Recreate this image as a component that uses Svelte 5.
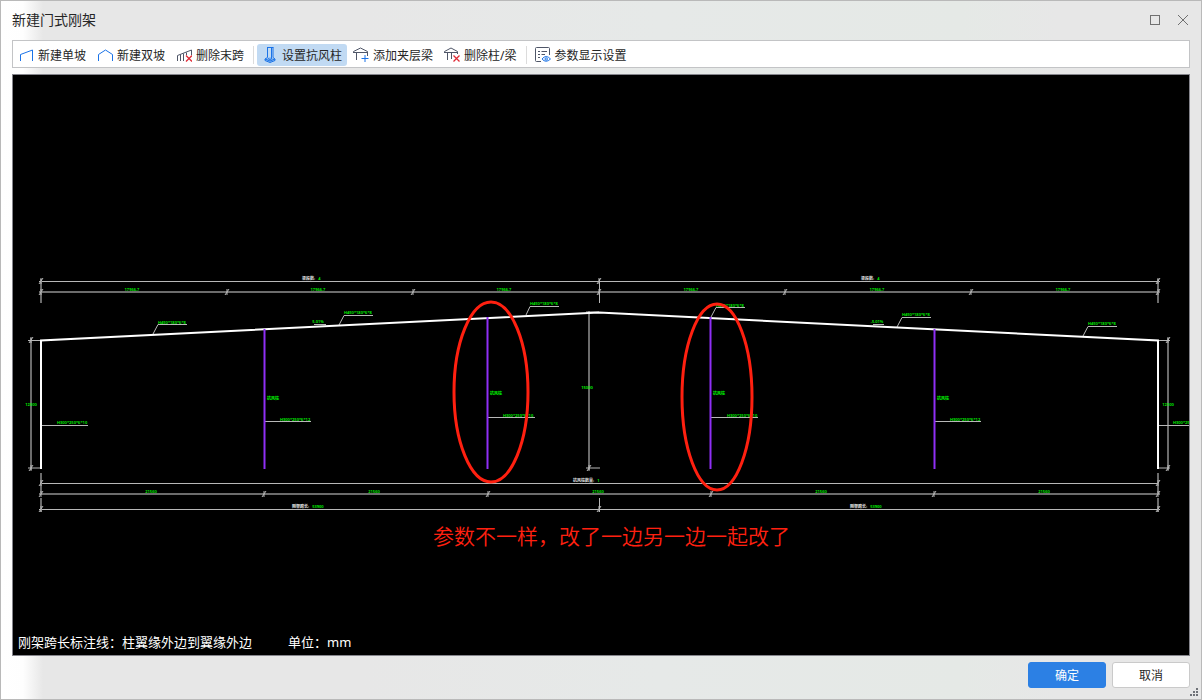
<script lang="ts">
  // Portal frame dialog: toolbar on top, elevation drawing below, confirm / cancel at the bottom.

  type Dim = { x: number; y: number; text: string };
  type Leader = { points: string; x: number; y: number; text: string };
  type Caption = { x: number; y: number; label: string; value: string };

  let activeTool = $state('wind');

  const bays = [41, 227, 413, 599, 785, 971, 1158];
  const spans = [41, 264, 488, 711, 934, 1158];

  const dims: Dim[] = [
    ...[132, 318, 504, 691, 877, 1063].map((x) => ({ x, y: 291, text: '17966.7' })),
    ...[151, 374, 598, 821, 1044].map((x) => ({ x, y: 493, text: '21560' })),
    { x: 31, y: 406, text: '12300' },
    { x: 587, y: 389, text: '15000' },
    { x: 1168, y: 406, text: '12300' },
    { x: 318, y: 323, text: '5.01%' },
    { x: 877, y: 323, text: '-5.01%' },
  ];

  const windColumns = [
    { x: 264, top: 329, label: 400 },
    { x: 487, top: 317, label: 395 },
    { x: 710, top: 317, label: 395 },
    { x: 934, top: 329, label: 400 },
  ];

  const leaders: Leader[] = [
    { points: '153,334 158,324.5 187,324.5', x: 158, y: 324, text: 'H450*180*6*8' },
    { points: '339,325 344,315.5 373,315.5', x: 344, y: 314, text: 'H450*180*6*8' },
    { points: '526,315 530,306.5 559,306.5', x: 530, y: 305, text: 'H450*180*6*8' },
    { points: '711,317 716,307.5 745,307.5', x: 716, y: 307, text: 'H450*180*6*8' },
    { points: '897,327 902,317.5 931,317.5', x: 902, y: 316, text: 'H450*180*6*8' },
    { points: '1083,336 1088,326.5 1117,326.5', x: 1088, y: 325, text: 'H450*180*6*8' },
    { points: '41,425.5 88,425.5', x: 57, y: 424, text: 'H300*250*6*10' },
    { points: '264,421.5 311,421.5', x: 280, y: 421, text: 'H300*250*6*12' },
    { points: '488,417.5 535,417.5', x: 503, y: 417, text: 'H300*250*6*10' },
    { points: '711,417.5 758,417.5', x: 727, y: 417, text: 'H300*250*6*10' },
    { points: '934,421.5 981,421.5', x: 950, y: 421, text: 'H300*250*6*12' },
    { points: '1158,425.5 1205,425.5', x: 1173, y: 424, text: 'H300*250*6*10' },
  ];

  const captions: Caption[] = [
    { x: 302, y: 280, label: '梁段数:', value: '4' },
    { x: 861, y: 280, label: '梁段数:', value: '4' },
    { x: 573, y: 482, label: '抗风柱数量:', value: '1' },
    { x: 292, y: 508, label: '刚架跨长:', value: '53900' },
    { x: 850, y: 508, label: '刚架跨长:', value: '53900' },
  ];
</script>

{#snippet tick(x: number, y: number)}
  <path d="M{x - 2} {y + 3}L{x + 2} {y - 3}M{x} {y - 3}v6" />
{/snippet}

<div class="window">
  <header>
    <h1>新建门式刚架</h1>
    <div class="controls">
      <button type="button" aria-label="最大化">
        <svg width="12" height="12" viewBox="0 0 12 12"><rect x="1.5" y="1.5" width="9" height="9" /></svg>
      </button>
      <button type="button" aria-label="关闭">
        <svg width="12" height="12" viewBox="0 0 12 12"><path d="M1 1l10 10M11 1L1 11" /></svg>
      </button>
    </div>
  </header>

  <nav class="toolbar">
    <button type="button" class:active={activeTool === 'single'} onclick={() => (activeTool = 'single')}>
      <svg class="icon" viewBox="0 0 16 16"><path class="blue" d="M2.5 14V7.5L14.5 3v11" /></svg>
      新建单坡
    </button>
    <button type="button" class:active={activeTool === 'double'} onclick={() => (activeTool = 'double')}>
      <svg class="icon" viewBox="0 0 16 16"><path class="blue" d="M1.5 14V7.5L8.5 3l7 4.5V14" /></svg>
      新建双坡
    </button>
    <button type="button" class:active={activeTool === 'removeSpan'} onclick={() => (activeTool = 'removeSpan')}>
      <svg class="icon" viewBox="0 0 16 16">
        <path class="dark" d="M1.5 14V8.5L15.5 3v5M4.5 14V7.5M7.5 14V6.5M10.5 8V5.5" />
        <path class="red" d="M10 8.5l6 6M16 8.5l-6 6" />
      </svg>
      删除末跨
    </button>
    <span class="sep"></span>
    <button type="button" class:active={activeTool === 'wind'} onclick={() => (activeTool = 'wind')}>
      <svg class="icon" viewBox="0 0 16 16">
        <path class="soft" d="M3 12l5-2 5 2v1l-5 2.5L3 13z" />
        <path class="blue" d="M5 .5h6.500M5.500 .5v10M9.500 .5v11M11 .5v10M5.500 10.500L3 12v1.500l5 2 5-2V12l-2-1.500M3 12l5 2 5-2M6 11.500l2 1 2-1" />
      </svg>
      设置抗风柱
    </button>
    <button type="button" class:active={activeTool === 'addBeam'} onclick={() => (activeTool = 'addBeam')}>
      <svg class="icon" viewBox="0 0 16 16">
        <path class="dark" d="M.5 6V4.500L7.500 1l7 3.500V9M1 5.500h13.500M3.500 6v7" />
        <path class="blue" d="M8.500 11.500h7M12 8v7" />
      </svg>
      添加夹层梁
    </button>
    <button type="button" class:active={activeTool === 'removeBeam'} onclick={() => (activeTool = 'removeBeam')}>
      <svg class="icon" viewBox="0 0 16 16">
        <path class="dark" d="M.5 6V4.500L7 1l6.500 3.500V7M1 5.500h12.500M3.500 6v7M7.500 6v6" />
        <path class="red" d="M9.5 8.5l6 6M15.5 8.5l-6 6" />
      </svg>
      删除柱/梁
    </button>
    <span class="sep"></span>
    <button type="button" class:active={activeTool === 'display'} onclick={() => (activeTool = 'display')}>
      <svg class="icon" viewBox="0 0 16 16">
        <path class="dark" d="M6 14.5H1.5a1 1 0 0 1-1-1V1.5a1 1 0 0 1 1-1h12a1 1 0 0 1 1 1V8M3 4.5h2M6.5 4.5H12M3 7.5h2M6.5 7.5H10M3 10.5h2" />
        <path class="blue" d="M7 12q4-5 8.5 0q-4.5 4.5-8.5 0z" />
        <circle class="blue" cx="11.2" cy="12" r="1.2" />
      </svg>
      参数显示设置
    </button>
  </nav>

  <main>
    <svg class="drawing" viewBox="13 75 1176 580" role="img" aria-label="刚架立面图">
      <g class="dim">
        <path d="M39 281.5H1160M41 483.5H1158M39 509.5H1160" />
        <path class="faint" d="M39 292H1160M39 494H1160" />
        <path d="M599.5 279v24M599.5 498v14" />
        <path class="faint" d="M41 279v24M1158 279v24M41 473v21M1158 473v21M41 498v14M1158 498v14" />
        <path class="faint" d="M31 338v132M1168 338v132M589 311v159" />
        <path d="M28 340.5H41M28 468H41M1158 340.5h12M1158 468h12M586 312h13M586 468h14" />
        <path d="M314 324.5h12M873 324.5h11" />
        {#each bays as x (x)}
          {@render tick(x, 292)}
        {/each}
        {#each spans as x (x)}
          {@render tick(x, 494)}
        {/each}
        {#each [41, 599, 1158] as x (x)}
          {@render tick(x, 281)}
          {@render tick(x, 509)}
        {/each}
        {#each [41, 1158] as x (x)}
          {@render tick(x, 483)}
        {/each}
        {#each [31, 1168] as x (x)}
          {@render tick(x, 340)}
          {@render tick(x, 468)}
        {/each}
        {@render tick(589, 468)}
        {#each leaders as leader (leader.points)}
          <polyline points={leader.points} />
        {/each}
      </g>

      <path class="frame" d="M41 469V340.5L599 312.5L1158 340.5V469" />
      {#each windColumns as col (col.x)}
        <path class="wind" d="M{col.x + 0.5} {col.top}V469" />
        <text class="note" x={col.x + 3} y={col.label}>抗风柱</text>
      {/each}

      {#each dims as d}
        <text class="note mid" x={d.x} y={d.y}>{d.text}</text>
      {/each}
      {#each leaders as leader (leader.points)}
        <text class="note" x={leader.x} y={leader.y}>{leader.text}</text>
      {/each}
      {#each captions as c}
        <text class="note caption" x={c.x} y={c.y}>{c.label} <tspan dx="2">{c.value}</tspan></text>
      {/each}

      <ellipse class="mark" cx="491" cy="392" rx="37" ry="90" />
      <ellipse class="mark" cx="717" cy="397" rx="35" ry="93" />
      <text class="remark" x="433" y="544">参数不一样，改了一边另一边一起改了</text>
    </svg>
    <p class="hint">
      <span>刚架跨长标注线：柱翼缘外边到翼缘外边</span>
      <span>单位：mm</span>
    </p>
  </main>

  <footer>
    <button type="button" class="primary">确定</button>
    <button type="button">取消</button>
  </footer>

  <svg class="grip" width="8" height="8" viewBox="0 0 8 8">
    <path d="M6 0h2v2H6zM3 3h2v2H3zM6 3h2v2H6zM0 6h2v2H0zM3 6h2v2H3zM6 6h2v2H6z" />
  </svg>
</div>

<style>
  :global(body) {
    margin: 0;
  }

  .window {
    position: relative;
    box-sizing: border-box;
    min-height: 100vh;
    display: flex;
    flex-direction: column;
    padding: 0 11px;
    border: 1px solid #b9b9b9;
    background: linear-gradient(90deg, #fff 0, #fefefe 22px, #e7e7e7 42px, #e7e7e7 30%, #e6e9e8 55%, #e5e9e6 80%, #e7e7e7 88%);
    color: #262626;
    font-family: 'Noto Sans', 'Noto Sans CJK SC', sans-serif;
    font-size: 12px;
  }

  button {
    font: inherit;
    color: inherit;
    border: none;
    background: none;
    padding: 0;
    cursor: pointer;
  }

  header {
    box-sizing: border-box;
    height: 39px;
    display: flex;
    align-items: center;
    justify-content: space-between;
    padding: 0 1px 2px 0;
  }

  h1 {
    margin: 0;
    font-size: 14px;
    font-weight: 400;
    line-height: 20px;
  }

  .controls {
    display: flex;
    gap: 16px;
  }

  .controls button {
    display: flex;
  }

  .controls svg {
    fill: none;
    stroke: #707070;
  }

  .toolbar {
    box-sizing: border-box;
    height: 28px;
    display: flex;
    align-items: center;
    gap: 1px;
    padding-top: 2px;
    border: 1px solid #c3c4c6;
    background: #fff;
  }

  .toolbar button {
    box-sizing: border-box;
    display: flex;
    align-items: center;
    gap: 4px;
    height: 22px;
    padding: 2px 5px 0;
    border-radius: 3px;
    line-height: 20px;
    white-space: nowrap;
  }

  .toolbar button.active {
    background: #c1daf3;
  }

  .sep {
    width: 1px;
    height: 18px;
    margin: 0 2px 0 3px;
    background: #dcdcdc;
  }

  .icon {
    width: 16px;
    height: 16px;
    margin-bottom: 2px;
    fill: none;
  }

  .blue {
    stroke: #1a73e8;
  }

  .dark {
    stroke: #4f5668;
  }

  .red {
    stroke: #e02a35;
    stroke-width: 1.3;
  }

  .soft {
    fill: #8fbcf0;
  }

  main {
    position: relative;
    flex: 1;
    display: flex;
    margin-top: 6px;
    border: 1px solid #85858c;
    background: #000;
  }

  .drawing {
    width: 100%;
    min-height: 0;
  }

  .dim {
    fill: none;
    stroke: #b8b8b8;
  }

  .faint {
    stroke: #6c6c6c;
    stroke-width: 2;
  }

  .frame {
    fill: none;
    stroke: #fff;
    stroke-width: 2;
  }

  .wind {
    stroke: #8f2ff5;
    stroke-width: 2;
  }

  .note {
    fill: #00ff00;
    font-size: 4px;
    font-weight: 600;
  }

  .mid {
    text-anchor: middle;
  }

  .caption {
    fill: #e8e8e8;
  }

  .caption tspan {
    fill: #00ff00;
  }

  .mark {
    fill: none;
    stroke: #ff2010;
    stroke-width: 3;
  }

  .remark {
    fill: #ff2010;
    font-family: 'Noto Sans CJK SC', sans-serif;
    font-size: 21px;
    font-weight: 350;
  }

  .hint {
    position: absolute;
    left: 5px;
    bottom: 3px;
    display: flex;
    gap: 36px;
    margin: 0;
    color: #fff;
    font-size: 13px;
    line-height: 20px;
  }

  footer {
    display: flex;
    justify-content: flex-end;
    gap: 6px;
    padding: 6px 0 11px;
  }

  footer button {
    box-sizing: border-box;
    width: 78px;
    height: 26px;
    padding-top: 2px;
    border: 1px solid #cacaca;
    border-radius: 3px;
    background: #fff;
    line-height: 20px;
  }

  footer .primary {
    border-color: #2c80e4;
    background: #2c80e4;
    color: #fff;
  }

  .grip {
    position: absolute;
    right: 3px;
    bottom: 3px;
    fill: #6f7278;
  }
</style>
